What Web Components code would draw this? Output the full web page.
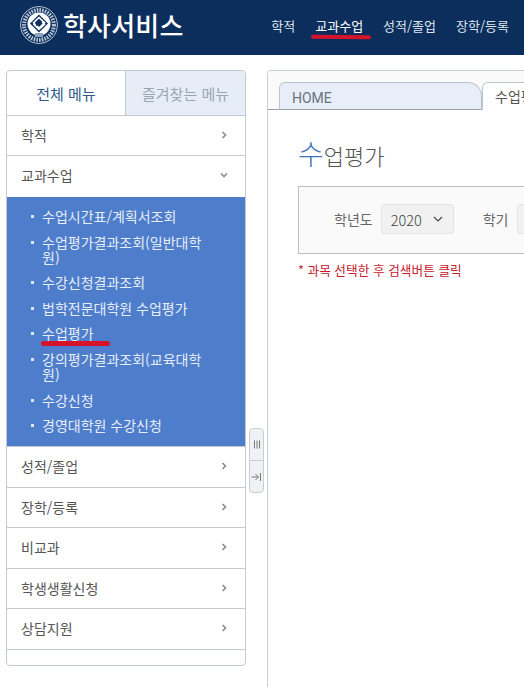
<!DOCTYPE html>
<html lang="ko">
<head>
<meta charset="utf-8">
<title>학사서비스</title>
<style>
  html, body { margin: 0; height: 100%; overflow: hidden; background: #fff; }
  body { font-family: "Noto Sans CJK KR", "Noto Sans", sans-serif; }
</style>
</head>
<body>
<app-page></app-page>
<script>
const FONT = '"Noto Sans CJK KR", "Noto Sans", sans-serif';

class TopNav extends HTMLElement {
  constructor() {
    super();
    this.attachShadow({ mode: 'open' }).innerHTML = `
<style>
  :host { display: flex; height: 55px; background: #0c2e5c; align-items: center; justify-content: space-between; overflow: hidden; font-family: ${FONT}; }
  .brand { display: flex; align-items: center; gap: 5px; margin-left: 20px; color: #fff; font-size: 26px; font-weight: 500; letter-spacing: 0.2px; margin-top: -6px; }
  svg { display: block; }
  nav { display: flex; gap: 20px; margin-right: 15px; margin-top: -3px; color: #dfe5ee; font-size: 13px; }
  a { position: relative; line-height: 18px; }
  .on { color: #fff; }
  .on::after { content: ''; position: absolute; left: -4px; right: -8px; top: 18px; height: 4px; border-radius: 2px; background: #d5142c; transform: rotate(0.4deg); }
</style>
<div class="brand">
  <svg width="38" height="38" viewBox="0 0 38 38">
    <circle cx="19" cy="19" r="18.4" fill="none" stroke="#cfd8e4" stroke-width="0.9"/>
    <circle cx="19" cy="19" r="14.9" fill="none" stroke="#b9c6d8" stroke-width="4" stroke-dasharray="1.6 1.1"/>
    <circle cx="19" cy="18" r="11.5" fill="#fff"/>
    <path d="M19 8.5 28 17.5 19 26.5 10 17.5Z" fill="#0c2e5c"/>
    <path d="M15.8 19 13.5 16.8 19 11.5 24.5 16.8 19 22 17 20M22.2 16 24.5 18.2 19 23.5 13.5 18.2" fill="none" stroke="#fff" stroke-width="1.6"/>
    <rect x="15" y="27" width="8" height="4" fill="#8ea2bd"/>
  </svg>
  <span>학사서비스</span>
</div>
<nav><a>학적</a><a class="on">교과수업</a><a>성적/졸업</a><a>장학/등록</a></nav>`;
  }
}
customElements.define('top-nav', TopNav);

class MenuRow extends HTMLElement {
  constructor() {
    super();
    const open = this.hasAttribute('open');
    this.attachShadow({ mode: 'open' }).innerHTML = `
<style>
  :host { display: flex; box-sizing: border-box; align-items: center; justify-content: space-between; height: var(--h, 40px); padding: 0 17px var(--pb, 2px) 14px; border-bottom: 1px solid #c3cad3; color: #555; font-size: 14px; }
  svg { display: block; flex: none; }
</style>
<slot></slot>
<svg width="8" height="8" viewBox="0 0 8 8"><path d="${open ? 'M1 2.5 4 5.5 7 2.5' : 'M2.5 1 5.5 4 2.5 7'}" fill="none" stroke="#8c8f94" stroke-width="1.7"/></svg>`;
  }
}
customElements.define('menu-row', MenuRow);

class SubItem extends HTMLElement {
  constructor() {
    super();
    this.attachShadow({ mode: 'open' }).innerHTML = `
<style>
  :host { display: block; position: relative; padding: 0 38px 0 35px; color: #e6edf8; font-size: 14px; line-height: 15px; }
  :host::before { content: ''; position: absolute; left: 24px; top: 6px; width: 3px; height: 3px; background: #dfe8f6; }
  :host([mark])::after { content: ''; position: absolute; left: 34px; top: 15px; width: 69px; height: 5px; border-radius: 2.5px; background: #d5142c; }
</style>
<slot></slot>`;
  }
}
customElements.define('sub-item', SubItem);

class SideMenu extends HTMLElement {
  constructor() {
    super();
    this.attachShadow({ mode: 'open' }).innerHTML = `
<style>
  :host { display: block; flex: none; box-sizing: border-box; width: 240px; height: 596px; border: 1px solid #c3cad3; border-radius: 4px; overflow: hidden; font-family: ${FONT}; }
  .tabs { display: flex; height: 44px; border-bottom: 1px solid #c3cad3; font-size: 15px; }
  .tabs div { display: flex; align-items: center; justify-content: center; }
  .all { width: 118px; color: #2f5a8c; }
  .fav { flex: 1; border-left: 1px solid #c3cad3; background: #e6edf7; color: #9ba6b4; }
  .sub { display: flex; flex-direction: column; gap: 10.6px; box-sizing: border-box; height: 250px; padding: 12px 0 0; background: #4e7dcb; border-bottom: 1px solid #c3cad3; }
</style>
<div class="tabs"><div class="all">전체 메뉴</div><div class="fav">즐겨찾는 메뉴</div></div>
<menu-row>학적</menu-row>
<menu-row open style="--h:41px;--pb:3px;border-bottom:0">교과수업</menu-row>
<div class="sub">
  <sub-item>수업시간표/계획서조회</sub-item>
  <sub-item>수업평가결과조회(일반대학원)</sub-item>
  <sub-item>수강신청결과조회</sub-item>
  <sub-item>법학전문대학원 수업평가</sub-item>
  <sub-item mark>수업평가</sub-item>
  <sub-item>강의평가결과조회(교육대학원)</sub-item>
  <sub-item>수강신청</sub-item>
  <sub-item>경영대학원 수강신청</sub-item>
</div>
<menu-row style="--h:41px">성적/졸업</menu-row>
<menu-row>장학/등록</menu-row>
<menu-row style="--h:41px">비교과</menu-row>
<menu-row>학생생활신청</menu-row>
<menu-row style="--h:41px">상담지원</menu-row>`;
  }
}
customElements.define('side-menu', SideMenu);

class SideHandle extends HTMLElement {
  constructor() {
    super();
    this.attachShadow({ mode: 'open' }).innerHTML = `
<style>
  :host { display: block; flex: none; box-sizing: border-box; width: 15px; height: 65px; margin: 358px 0 0 3px; border: 1px solid #c9ced5; border-radius: 4px; background: #eff1f5; }
  div { display: flex; height: 31px; align-items: center; justify-content: center; }
  div + div { height: 32px; border-top: 1px solid #c9ced5; }
</style>
<div><svg width="8" height="9" viewBox="0 0 8 9"><path d="M1.5 .5V8.5M4 .5V8.5M6.5 .5V8.5" stroke="#777" stroke-width="1"/></svg></div>
<div><svg width="11" height="10" viewBox="0 0 11 10"><path d="M0.5 5H7M4.5 2 7.5 5 4.5 8M9.5 1V9" fill="none" stroke="#777" stroke-width="1"/></svg></div>`;
  }
}
customElements.define('side-handle', SideHandle);

class ContentPanel extends HTMLElement {
  constructor() {
    super();
    this.attachShadow({ mode: 'open' }).innerHTML = `
<style>
  :host { display: block; box-sizing: border-box; flex: none; width: 400px; height: 640px; margin-left: 3px; border: 1px solid #c9ced5; border-radius: 4px 0 0 0; font-family: ${FONT}; }
  .tabs { display: flex; align-items: flex-end; height: 38px; padding-left: 11px; border-bottom: 1px solid #9aa1ab; background: #fafafa; border-radius: 4px 0 0 0; }
  .tab { box-sizing: border-box; flex: none; height: 28px; margin-bottom: -1px; padding: 3px 0 0 13px; border: 1px solid #b9c3d0; border-radius: 6px 14px 0 0; font-size: 14px; line-height: 20px; }
  .home { width: 203px; padding: 5px 0 0 12px; background: #e8eef7; color: #6a7380; border-bottom: 1px solid #9aa1ab; font-family: Roboto, sans-serif; }
  .cur { width: 150px; padding-left: 12px; background: #fff; color: #555; border-bottom: 1px solid #fff; }
  .body { padding: 25px 0 0 30px; }
  h1 { margin: 0; font-size: 22px; font-weight: 300; line-height: 36px; color: #555; }
  h1 b { font-weight: 300; color: #3f76b8; font-size: 28px; }
  .search { display: flex; align-items: center; box-sizing: border-box; width: 400px; height: 68px; margin-top: 13px; padding: 0 0 2px 35px; border: 1px solid #bdbdbd; background: #fafafa; color: #666; font-size: 14px; }
  .sel { display: flex; flex: none; align-items: center; box-sizing: border-box; height: 30px; margin-left: 8px; padding-left: 9px; border: 1px solid #e3e3e3; border-radius: 3px; background: #f1f1f1; font-size: 14.5px; }
  .year { width: 73px; gap: 11px; font-weight: 300; color: #444; }
  .term { width: 60px; margin-left: 9px; }
  .lab2 { margin-left: 29px; }
  .note { margin: 7px 0 0; color: #c8202c; font-size: 12.7px; line-height: 18px; }
</style>
<div class="tabs"><div class="tab home">HOME</div><div class="tab cur">수업평가</div></div>
<div class="body">
  <h1><b>수</b>업평가</h1>
  <div class="search">
    <span>학년도</span>
    <div class="sel year">2020 <svg width="10" height="6" viewBox="0 0 10 6"><path d="M1 1 5 5 9 1" fill="none" stroke="#444" stroke-width="1.2"/></svg></div>
    <span class="lab2">학기</span>
    <div class="sel term"></div>
  </div>
  <p class="note">* 과목 선택한 후 검색버튼 클릭</p>
</div>`;
  }
}
customElements.define('content-panel', ContentPanel);

class AppPage extends HTMLElement {
  constructor() {
    super();
    this.attachShadow({ mode: 'open' }).innerHTML = `
<style>
  :host { display: block; width: 524px; height: 687px; overflow: hidden; }
  main { display: flex; align-items: flex-start; padding: 15px 0 0 6px; }
</style>
<top-nav></top-nav>
<main><side-menu></side-menu><side-handle></side-handle><content-panel></content-panel></main>`;
  }
}
customElements.define('app-page', AppPage);
</script>
</body>
</html>
